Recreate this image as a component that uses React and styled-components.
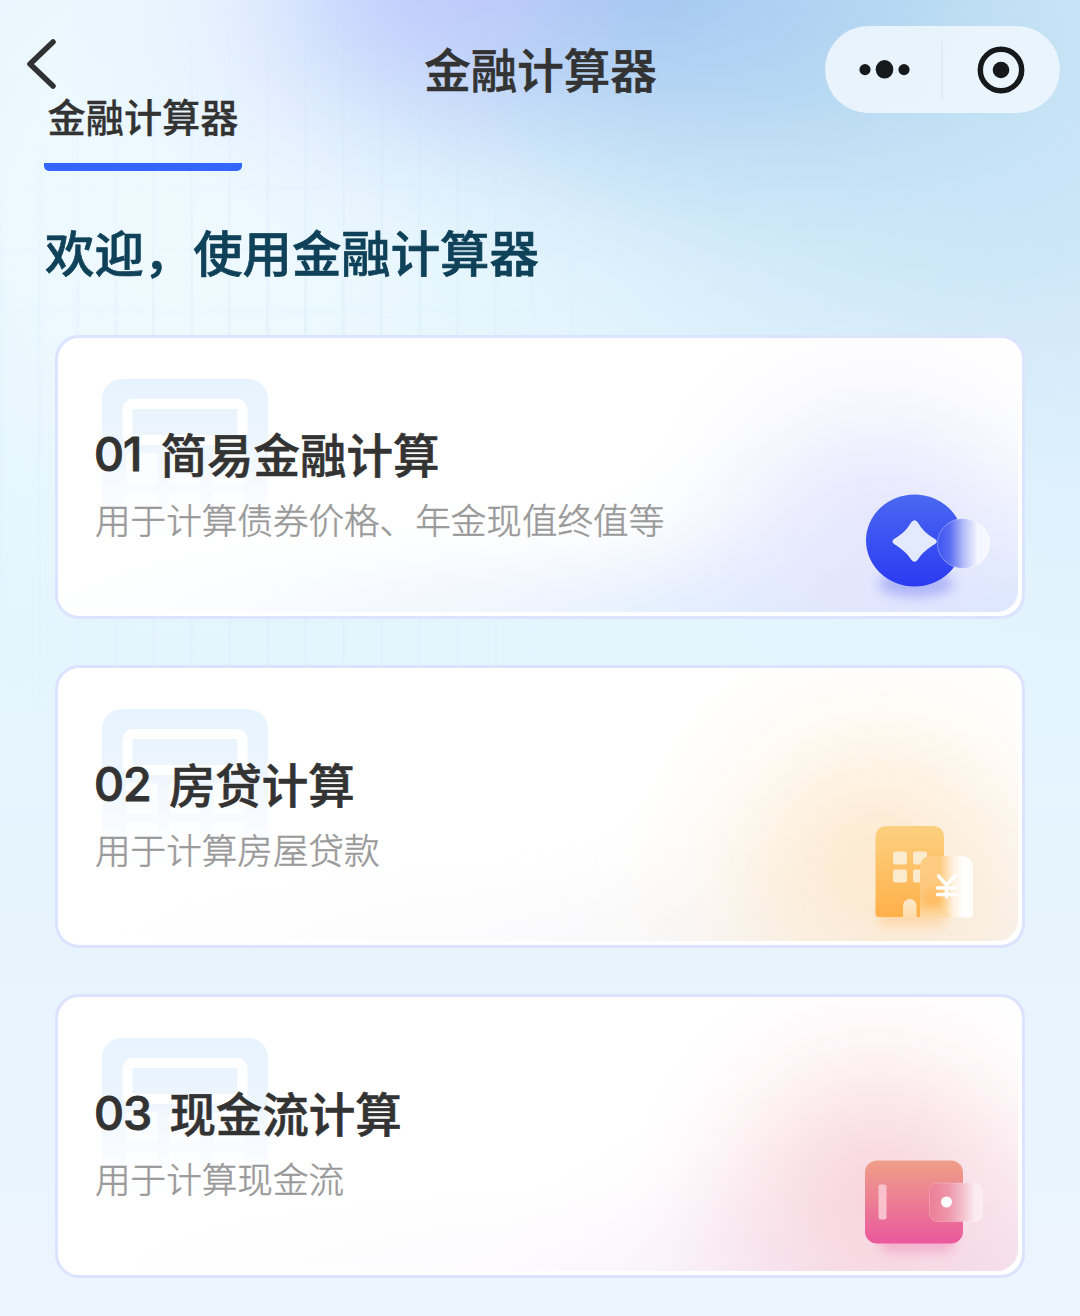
import React from "react";
import styled, { createGlobalStyle } from "styled-components";

const GlobalStyle = createGlobalStyle`
  body {
    margin: 0;
    font-family: "Noto Sans CJK SC", sans-serif;
  }
`;

// eased falloff so the glows have no visible rim
const fade = (rgb, alpha) =>
  [1, 0.88, 0.66, 0.42, 0.2, 0.06, 0]
    .map((step, i) => `rgba(${rgb}, ${(step * alpha).toFixed(3)}) ${Math.round((i * 100) / 6)}%`)
    .join(", ");

const cards = [
  {
    num: "01",
    gap: 19,
    title: "简易金融计算",
    desc: "用于计算债券价格、年金现值终值等",
    glow: "228, 229, 253",
    corner: "217, 229, 254",
    base: "234, 243, 254",
    Icon: CoinIcon,
  },
  {
    num: "02",
    gap: 18,
    title: "房贷计算",
    desc: "用于计算房屋贷款",
    glow: "253, 232, 203",
    corner: "246, 240, 234",
    base: "250, 250, 252",
    Icon: HouseIcon,
  },
  {
    num: "03",
    gap: 18,
    title: "现金流计算",
    desc: "用于计算现金流",
    glow: "248, 210, 219",
    corner: "243, 224, 236",
    base: "252, 250, 253",
    Icon: WalletIcon,
  },
];

function BackIcon() {
  return (
    <svg width="30" height="52" viewBox="0 0 30 52" fill="none">
      <path
        d="M27 4 L4 26 L27 48"
        stroke="#2f3133"
        strokeWidth="5.500"
        strokeLinecap="round"
        strokeLinejoin="round"
      />
    </svg>
  );
}

function DotsIcon() {
  return (
    <svg width="52" height="20" viewBox="0 0 52 20" fill="#171a1c">
      <circle cx="6" cy="9.600" r="5.600" />
      <ellipse cx="25.500" cy="9.300" rx="8.800" ry="9.300" />
      <circle cx="45" cy="9.600" r="5.600" />
    </svg>
  );
}

function TargetIcon() {
  return (
    <svg width="48" height="48" viewBox="0 0 48 48">
      <circle cx="24" cy="24" r="20.700" fill="none" stroke="#15191b" strokeWidth="5.400" />
      <circle cx="24" cy="24" r="8.300" fill="#15191b" />
    </svg>
  );
}

function Watermark({ id }) {
  return (
    <svg width="166" height="200" viewBox="0 0 166 200">
      <defs>
        <linearGradient id={`wm${id}`} x1="0" y1="0" x2="0" y2="1">
          <stop offset="0" stopColor="#e7f3fe" />
          <stop offset="0.3" stopColor="#edf5fd" />
          <stop offset="0.5" stopColor="#f6fafe" />
          <stop offset="0.7" stopColor="#fcfdff" stopOpacity="0.8" />
          <stop offset="0.85" stopColor="#ffffff" stopOpacity="0" />
        </linearGradient>
      </defs>
      <rect width="166" height="200" rx="20" fill={`url(#wm${id})`} />
      <rect x="25.500" y="25" width="115" height="36" rx="5" fill="none" stroke="#fff" strokeWidth="10" />
      <g fill="#fff" opacity="0.75">
        <rect x="24" y="74" width="32" height="31" rx="4" />
        <rect x="67" y="74" width="32" height="31" rx="4" />
        <rect x="111" y="74" width="32" height="31" rx="4" />
        <rect x="24" y="113" width="32" height="31" rx="4" />
        <rect x="67" y="113" width="32" height="31" rx="4" />
        <rect x="111" y="113" width="32" height="31" rx="4" />
      </g>
    </svg>
  );
}

function CoinIcon() {
  return (
    <svg width="180" height="150" viewBox="0 0 180 150">
      <defs>
        <linearGradient id="coin" x1="0" y1="0" x2="0" y2="1">
          <stop offset="0" stopColor="#4a68f1" />
          <stop offset="1" stopColor="#2b3af2" />
        </linearGradient>
        <linearGradient id="bubble" x1="0" y1="0" x2="1" y2="0">
          <stop offset="0" stopColor="#3c55f0" />
          <stop offset="0.24" stopColor="#5b6df2" />
          <stop offset="0.5" stopColor="#b4bdf8" />
          <stop offset="0.76" stopColor="#f3f4fe" />
          <stop offset="1" stopColor="#f8f9ff" />
        </linearGradient>
        <linearGradient id="bubbleEdge" x1="0" y1="0" x2="1" y2="0">
          <stop offset="0" stopColor="#8f9cf8" stopOpacity="0.7" />
          <stop offset="0.5" stopColor="#ffffff" stopOpacity="0.4" />
          <stop offset="1" stopColor="#ffffff" stopOpacity="0.8" />
        </linearGradient>
        <filter id="coinBlur" x="-30%" y="-150%" width="160%" height="400%">
          <feGaussianBlur stdDeviation="6" />
        </filter>
      </defs>
      <ellipse cx="76" cy="113" rx="38" ry="13" fill="#9aa1f6" opacity="0.7" filter="url(#coinBlur)" />
      <ellipse cx="74.500" cy="69.500" rx="48.500" ry="46" fill="url(#coin)" />
      <path
        d="M71.500 51 Q74.500 47.500 77.500 51 C83 60 87 63 95 68 Q98.500 70.500 95 73 C87 78 83 81 77.500 89 Q74.500 92.500 71.500 89 C66 81 62 78 54 73 Q51 70.500 54 68 C62 63 66 60 71.500 51Z"
        fill="#e3e9fe"
      />
      <ellipse cx="123.500" cy="72.500" rx="26" ry="25" fill="url(#bubble)" stroke="url(#bubbleEdge)" />
    </svg>
  );
}

function HouseIcon() {
  return (
    <svg width="180" height="150" viewBox="0 0 180 150">
      <defs>
        <linearGradient id="house" x1="0" y1="0" x2="0" y2="1">
          <stop offset="0" stopColor="#fcd07f" />
          <stop offset="1" stopColor="#ffb04a" />
        </linearGradient>
        <linearGradient id="door" x1="0" y1="0" x2="0" y2="1">
          <stop offset="0" stopColor="#fdeacb" />
          <stop offset="1" stopColor="#fddba9" />
        </linearGradient>
        <linearGradient id="pane" x1="0" y1="0" x2="1" y2="0">
          <stop offset="0" stopColor="#fdcb82" />
          <stop offset="0.38" stopColor="#fecb80" />
          <stop offset="0.62" stopColor="#fef0dc" />
          <stop offset="0.82" stopColor="#ffffff" />
          <stop offset="1" stopColor="#fffdfa" />
        </linearGradient>
        <linearGradient id="paneFoot" x1="0" y1="0" x2="0" y2="1">
          <stop offset="0.78" stopColor="#fdd59c" stopOpacity="0" />
          <stop offset="1" stopColor="#fddcae" />
        </linearGradient>
        <filter id="houseBlur" x="-50%" y="-150%" width="200%" height="400%">
          <feGaussianBlur stdDeviation="6" />
        </filter>
      </defs>
      <rect x="38" y="104" width="68" height="22" rx="8" fill="#ffcb8e" opacity="0.6" filter="url(#houseBlur)" />
      <path
        d="M35.500 38 Q35.500 26 47.500 26 H92 Q104 26 104 38 V117 H39 Q35.500 117 35.500 114Z"
        fill="url(#house)"
      />
      <g fill="#fdebce">
        <rect x="53" y="51.500" width="14" height="13" rx="2.500" />
        <rect x="73" y="51.500" width="14" height="13" rx="2.500" />
        <rect x="53" y="69.500" width="14" height="13" rx="2.500" />
        <rect x="73" y="69.500" width="14" height="13" rx="2.500" />
      </g>
      <path d="M63 118 V106 A6.700 7 0 0 1 76.500 106 V118Z" fill="url(#door)" />
      <path
        d="M80 68 Q80 56 92 56 H121 Q133 56 133 68 V114 Q133 117.500 130 117.500 H80Z"
        fill="url(#pane)"
      />
      <ellipse cx="93" cy="98" rx="9" ry="10" fill="#ffb04e" opacity="0.75" filter="url(#houseBlur)" />
      <rect x="80" y="56" width="28" height="61.500" fill="url(#paneFoot)" />
      <path
        d="M98.500 76 L106.500 85 L115 76 M97.500 88 H116 M97.500 94.500 H116 M106.500 85 V97"
        fill="none"
        stroke="#fff"
        strokeWidth="3.400"
        strokeLinecap="round"
      />
    </svg>
  );
}

function WalletIcon() {
  return (
    <svg width="180" height="150" viewBox="0 0 180 150">
      <defs>
        <linearGradient id="wallet" x1="0" y1="0" x2="0" y2="1">
          <stop offset="0" stopColor="#ef9f88" />
          <stop offset="0.5" stopColor="#ec7d93" />
          <stop offset="1" stopColor="#ea589e" />
        </linearGradient>
        <linearGradient id="clasp" x1="0" y1="0" x2="1" y2="0">
          <stop offset="0" stopColor="#ec7f96" />
          <stop offset="0.35" stopColor="#ee95a9" />
          <stop offset="0.62" stopColor="#f4bfcb" />
          <stop offset="0.85" stopColor="#faebf0" />
          <stop offset="1" stopColor="#fbedf3" />
        </linearGradient>
        <filter id="walletBlur" x="-30%" y="-150%" width="160%" height="400%">
          <feGaussianBlur stdDeviation="6" />
        </filter>
      </defs>
      <rect x="40" y="101" width="74" height="21" rx="8" fill="#f08cbb" opacity="0.55" filter="url(#walletBlur)" />
      <rect x="25" y="30.500" width="98" height="83" rx="12" fill="url(#wallet)" />
      <rect x="38.500" y="54.500" width="8" height="35" rx="2" fill="#f8c1cc" />
      <rect
        x="89.500"
        y="53"
        width="53"
        height="38.500"
        rx="8"
        fill="url(#clasp)"
        stroke="#fff"
        strokeOpacity="0.22"
      />
      <circle cx="106.500" cy="72" r="5.500" fill="#fff" />
    </svg>
  );
}

function CalcCard({ num, gap, title, desc, glow, corner, base, Icon }) {
  return (
    <Card $glow={glow} $corner={corner} $base={base}>
      <MarkLayer>
        <Watermark id={num} />
      </MarkLayer>
      <CardText>
        <CardTitle>
          <Num $gap={gap}>{num}</Num>
          {title}
        </CardTitle>
        <CardDesc>{desc}</CardDesc>
      </CardText>
      <IconLayer>
        <Icon />
      </IconLayer>
    </Card>
  );
}

const App = () => {
  return (
    <Page>
      <GlobalStyle />
      <NavBar>
        <BackButton aria-label="返回">
          <BackIcon />
        </BackButton>
        <NavTitle>金融计算器</NavTitle>
        <Capsule>
          <CapsuleButton>
            <DotsIcon />
          </CapsuleButton>
          <CapsuleLine />
          <CapsuleButton>
            <TargetIcon />
          </CapsuleButton>
        </Capsule>
      </NavBar>
      <Tabs>
        <Tab>金融计算器</Tab>
      </Tabs>
      <Welcome>欢迎，使用金融计算器</Welcome>
      <CardList>
        {cards.map((card) => (
          <CalcCard key={card.num} {...card} />
        ))}
      </CardList>
    </Page>
  );
};

const Page = styled.div`
  position: relative;
  isolation: isolate;
  box-sizing: border-box;
  width: 1080px;
  height: 1316px;
  overflow: hidden;
  display: flex;
  flex-direction: column;
  background:
    radial-gradient(ellipse 260px 240px at 455px -60px, ${fade("194, 194, 255", 0.75)}),
    radial-gradient(ellipse 430px 320px at 640px -40px, ${fade("163, 199, 241", 1)}),
    radial-gradient(ellipse 620px 480px at 880px 20px, ${fade("186, 221, 242", 0.95)}),
    radial-gradient(ellipse 600px 560px at 1100px 240px, ${fade("209, 231, 249", 0.75)}),
    radial-gradient(ellipse 320px 260px at 370px 30px, ${fade("210, 222, 255", 0.6)}),
    radial-gradient(ellipse 420px 460px at 180px 230px, ${fade("240, 250, 255", 0.9)}),
    linear-gradient(180deg, #e8f7fe 0, #e5f6fe 500px, #e6f4fe 900px, #edf5ff 1316px);

  /* faint grid behind the top left part */
  &::before {
    content: "";
    position: absolute;
    z-index: -1;
    inset: 0;
    background:
      repeating-linear-gradient(90deg, rgba(170, 208, 232, 0.15) 0 3px, transparent 3px 38px),
      repeating-linear-gradient(180deg, rgba(170, 208, 232, 0.06) 0 3px, transparent 3px 62px);
    mask-image: radial-gradient(ellipse 360px 420px at 280px 420px, #000, transparent 100%);
  }
`;

const NavBar = styled.div`
  box-sizing: border-box;
  height: 94px;
  padding: 26px 20px 0 26px;
  display: grid;
  grid-template-columns: 235px 1fr 235px;
  align-items: start;
`;

const BackButton = styled.button`
  justify-self: start;
  margin-top: 12px;
  padding: 0;
  border: none;
  background: transparent;
  display: flex;
`;

const NavTitle = styled.h1`
  margin: 7px 5px 0 0;
  text-align: center;
  font-size: 46.500px;
  line-height: 70px;
  font-weight: 500;
  color: #333333;
  -webkit-text-stroke: 0.600px #333333;
`;

const Capsule = styled.div`
  justify-self: end;
  width: 235px;
  height: 87px;
  border-radius: 44px;
  background: rgba(240, 247, 253, 0.86);
  display: flex;
  align-items: center;
`;

const CapsuleButton = styled.div`
  flex: 1;
  display: flex;
  justify-content: center;

  &:first-child {
    padding-left: 3px;
  }
`;

const CapsuleLine = styled.div`
  width: 2px;
  height: 56px;
  margin-right: 1px;
  background: #dfeaf1;

  & + ${CapsuleButton} {
    padding-right: 3px;
  }
`;

const Tabs = styled.div`
  display: flex;
  padding-left: 44px;
`;

const Tab = styled.div`
  box-sizing: border-box;
  width: 198px;
  height: 77px;
  font-size: 38.200px;
  line-height: 44px;
  font-weight: 500;
  text-align: center;
  color: #333333;
  -webkit-text-stroke: 0.300px #333333;
  border-bottom: 8px solid #3366ff;
  border-radius: 0 0 5px 5px;
`;

const Welcome = styled.h2`
  margin: 44px 0 0 45px;
  font-size: 49.400px;
  line-height: 72px;
  font-weight: 500;
  color: #0f4159;
  -webkit-text-stroke: 0.700px #0f4159;
`;

const CardList = styled.div`
  display: flex;
  flex-direction: column;
  gap: 46px;
  padding: 48px 55px 0;
`;

const Card = styled.div`
  position: relative;
  box-sizing: border-box;
  height: 283.500px;
  border: 3px solid #dbe3fe;
  border-radius: 24px;
  padding: 81px 37px 0 36px;
  box-shadow: inset -4px -4px 1px #ffffff;
  background:
    radial-gradient(ellipse 250px 240px at 820px 195px, ${(p) => fade(p.$glow, 0.85)}),
    radial-gradient(ellipse 460px 230px at 92% 106%, ${(p) => fade(p.$corner, 1)}),
    radial-gradient(ellipse 700px 110px at 65% 100%, ${(p) => fade(p.$base, 1)}),
    #ffffff;
`;

const MarkLayer = styled.div`
  position: absolute;
  left: 44px;
  top: 41px;
  display: flex;
`;

const IconLayer = styled.div`
  position: absolute;
  right: 2px;
  bottom: -5px;
  display: flex;
`;

const CardText = styled.div`
  position: relative;
`;

const CardTitle = styled.h3`
  margin: 0;
  display: flex;
  font-size: 46.500px;
  line-height: 68px;
  font-weight: 500;
  color: #333333;
  -webkit-text-stroke: 0.600px #333333;
`;

const Num = styled.span`
  margin-right: ${(p) => p.$gap}px;
  padding-top: 1px;
  font-family: Inter, "Noto Sans CJK SC", sans-serif;
  font-weight: 500;
  font-size: 46.500px;
  letter-spacing: -0.900px;
  -webkit-text-stroke: 1px #333333;
`;

const CardDesc = styled.p`
  margin: 5px 0 0 1px;
  font-size: 35.600px;
  line-height: 52px;
  font-weight: 300;
  color: #999999;
  -webkit-text-stroke: 0.500px #999999;
`;

export default App;
